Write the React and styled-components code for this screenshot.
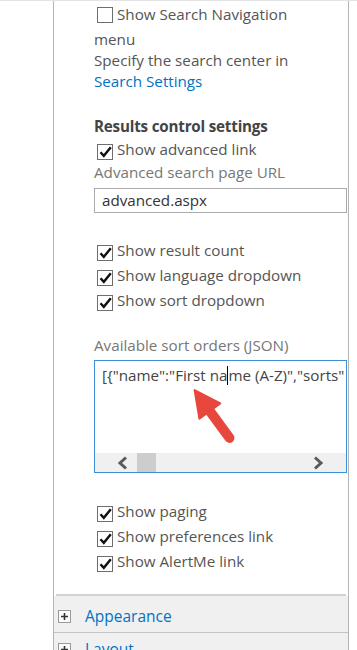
import React from "react";
import styled, { createGlobalStyle } from "styled-components";

const GlobalStyle = createGlobalStyle`
  html, body {
    margin: 0;
    padding: 0;
    background: #fff;
    overflow: hidden;
  }
  body {
    font-family: "Open Sans", "Noto Sans", "Liberation Sans", sans-serif;
    font-size: 15.2px;
    color: #555;
  }
`;

const Page = styled.div`
  display: flex;
  height: 650px;
  border-top: 1px solid #e4e4e4;
  box-sizing: border-box;
`;

const Gutter = styled.div`
  width: 53px;
  flex: none;
`;

const Panel = styled.div`
  width: 294px;
  flex: none;
  border-left: 1px solid #b4b4b4;
  border-right: 1px solid #b4b4b4;
  display: flex;
  flex-direction: column;
  overflow: hidden;
`;

const Body = styled.div`
  flex: none;
  padding: 1px 1px 20px 40px;
  display: flex;
  flex-direction: column;
`;

const CheckLine = styled.label`
  display: block;
  line-height: 25px;
  color: #555;
  max-width: ${({ $narrow }) => ($narrow ? "215px" : "none")};
`;

const Group = styled.div`
  margin-top: ${({ $gap }) => $gap}px;
`;

const Box = styled.span`
  display: inline-flex;
  align-items: center;
  justify-content: center;
  box-sizing: border-box;
  width: 16px;
  height: 16px;
  margin: 0 4px 0 3px;
  border: 1px solid #6e6e6e;
  background: #fff;
  vertical-align: -3px;
`;

const Text = styled.div`
  line-height: 21px;
  margin-top: ${({ $mt }) => $mt || 0}px;
  color: #555;
`;

const SettingsLink = styled.a`
  display: block;
  line-height: 21px;
  color: #0072c6;
  text-decoration: none;
`;

const Heading = styled.div`
  margin-top: 24px;
  line-height: 21px;
  font-weight: 700;
  color: #444;
  letter-spacing: -0.2px;
`;

const FieldLabel = styled.div`
  line-height: 21px;
  color: #777;
  margin-top: ${({ $mt }) => $mt || 0}px;
`;

const TextInput = styled.div`
  margin-top: 5px;
  height: 25px;
  box-sizing: border-box;
  border: 1px solid #ababab;
  padding: 0 7px;
  line-height: 23px;
  color: #333;
`;

const TextArea = styled.div`
  position: relative;
  margin-top: 4px;
  height: 113px;
  box-sizing: border-box;
  border: 1px solid #3c8fd6;
  display: flex;
  flex-direction: column;
`;

const AreaText = styled.div`
  flex: 1;
  padding: 4px 0 0 7px;
  line-height: 21px;
  white-space: nowrap;
  overflow: hidden;
  color: #444;
`;

const Caret = styled.span`
  display: inline-block;
  width: 1px;
  height: 19px;
  background: #000;
  vertical-align: -4px;
`;

const ScrollBar = styled.div`
  height: 19px;
  background: #f0f0f0;
  display: flex;
  align-items: center;
  padding: 0 22px;
`;

const Thumb = styled.span`
  width: 19px;
  height: 19px;
  margin-left: 9px;
  background: #cdcdcd;
`;

const Spacer = styled.span`
  flex: 1;
`;

const ArrowMark = styled.svg`
  position: absolute;
  left: 0;
  top: 0;
  width: 100%;
  height: 100%;
  overflow: visible;
  pointer-events: none;
`;

const Separator = styled.div`
  flex: none;
  height: 2px;
  margin: 0 2px;
  background: #d2d2d2;
`;

const Section = styled.div`
  flex: none;
  height: ${({ $first }) => ($first ? 36 : 37)}px;
  box-sizing: border-box;
  background: #f0f0f0;
  border-top: ${({ $first }) => ($first ? "none" : "1px solid #c4c4c4")};
  display: flex;
  align-items: center;
  padding: ${({ $first }) => ($first ? "4px 0 0 4px" : "0 0 4px 4px")};
  gap: 14px;
`;

const PlusBox = styled.span`
  width: 13px;
  height: 13px;
  box-sizing: border-box;
  border: 1px solid #9a9a9a;
  background: #fbfbfb;
  display: flex;
  align-items: center;
  justify-content: center;
`;

const SectionTitle = styled.span`
  color: #0072c6;
  font-size: 15.5px;
`;

const Check = ({ checked }) => (
  <Box>
    {checked && (
      <svg width="13" height="12" viewBox="0 0 13 12">
        <path d="M1.5 6.2 L4.8 9.8 L11.8 1.2" fill="none" stroke="#111" strokeWidth="2.4" />
      </svg>
    )}
  </Box>
);

const CheckItem = ({ checked = true, narrow, children }) => (
  <CheckLine $narrow={narrow}>
    <Check checked={checked} />
    {children}
  </CheckLine>
);

const Chevron = ({ dir }) => (
  <svg width="11" height="14" viewBox="0 0 11 14">
    <path
      d={dir === "left" ? "M9 1.5 L3 7 L9 12.5" : "M2 1.5 L8 7 L2 12.5"}
      fill="none"
      stroke="#5a5a5a"
      strokeWidth="3"
    />
  </svg>
);

const Plus = () => (
  <PlusBox>
    <svg width="7" height="7" viewBox="0 0 7 7">
      <path d="M0 3.5 H7 M3.5 0 V7" stroke="#333" strokeWidth="1.6" />
    </svg>
  </PlusBox>
);

export default function App() {
  return (
    <>
      <GlobalStyle />
      <Page>
        <Gutter />
        <Panel>
          <Body>
            <CheckItem checked={false} narrow>
              Show Search Navigation menu
            </CheckItem>
            <Text $mt={-2}>Specify the search center in</Text>
            <SettingsLink href="#">Search Settings</SettingsLink>

            <Heading>Results control settings</Heading>
            <CheckItem>Show advanced link</CheckItem>
            <FieldLabel>Advanced search page URL</FieldLabel>
            <TextInput>advanced.aspx</TextInput>

            <Group $gap={25}>
              <CheckItem>Show result count</CheckItem>
              <CheckItem>Show language dropdown</CheckItem>
              <CheckItem>Show sort dropdown</CheckItem>
            </Group>

            <FieldLabel $mt={22}>Available sort orders (JSON)</FieldLabel>
            <TextArea>
              <AreaText>
                [{"{"}"name":"First na
                <Caret />
                me (A-Z)","sorts"
              </AreaText>
              <ScrollBar>
                <Chevron dir="left" />
                <Thumb />
                <Spacer />
                <Chevron dir="right" />
              </ScrollBar>
              <ArrowMark viewBox="0 0 252 111" width="252" height="111">
                <path
                  d="M113 47 L135 77"
                  stroke="#e8473e"
                  strokeWidth="10"
                  strokeLinecap="round"
                />
                <path d="M100 29 L104.8 57.7 L125.8 42.3 Z" fill="#e8473e" stroke="#e8473e" strokeWidth="2" strokeLinejoin="round" />
              </ArrowMark>
            </TextArea>

            <Group $gap={26}>
              <CheckItem>Show paging</CheckItem>
              <CheckItem>Show preferences link</CheckItem>
              <CheckItem>Show AlertMe link</CheckItem>
            </Group>
          </Body>
          <Separator />
          <Section $first>
            <Plus />
            <SectionTitle>Appearance</SectionTitle>
          </Section>
          <Section>
            <Plus />
            <SectionTitle>Layout</SectionTitle>
          </Section>
        </Panel>
      </Page>
    </>
  );
}
